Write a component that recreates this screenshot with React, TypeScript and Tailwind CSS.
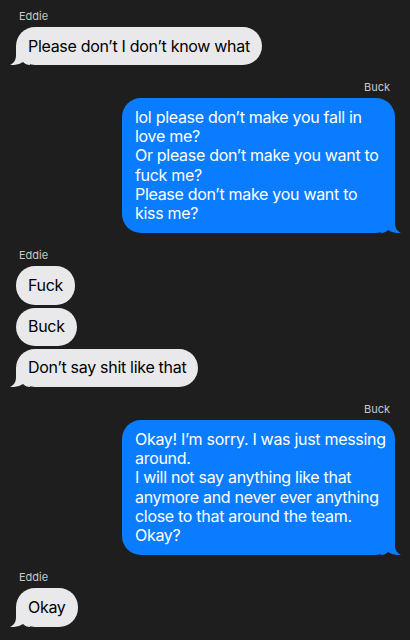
type Msg = { from: "Eddie" | "Buck"; lines: string[] };

const groups: Msg[] = [
  { from: "Eddie", lines: ["Please don’t I don’t know what"] },
  {
    from: "Buck",
    lines: [
      "lol please don’t make you fall in love me?\nOr please don’t make you want to fuck me?\nPlease don’t make you want to kiss me?",
    ],
  },
  { from: "Eddie", lines: ["Fuck", "Buck", "Don’t say shit like that"] },
  {
    from: "Buck",
    lines: [
      "Okay! I’m sorry. I was just messing around.\nI will not say anything like that anymore and never ever anything close to that around the team.\nOkay?",
    ],
  },
  { from: "Eddie", lines: ["Okay"] },
];

const Tail = ({ mine }: { mine: boolean }) => (
  <svg
    viewBox="0 0 20 20"
    className={`absolute bottom-0 h-5 w-5 ${mine ? "-right-[6px] -scale-x-100 text-[#0a7cff]" : "-left-[6px] text-[#e9e9eb]"}`}
    fill="currentColor"
  >
    <path d="M6 0 L6 10 C6 15 4 18 0 20 C5 20.5 10 19 13 17 C15 19 17 20 20 20 L20 0 Z" />
  </svg>
);

const Bubble = ({ text, mine, tail }: { text: string; mine: boolean; tail: boolean }) => (
  <div
    className={`relative max-w-[273px] whitespace-pre-line rounded-[19px] py-[9.5px] text-[16px] leading-[19.33px] tracking-[-0.3px] ${
      mine ? "bg-[#0a7cff] pl-[13px] pr-[9px] text-white" : "bg-[#e9e9eb] px-3 text-black"
    }`}
  >
    {tail && <Tail mine={mine} />}
    <span className="relative">{text}</span>
  </div>
);

export default function App() {
  return (
    <div
      className="flex min-h-[640px] w-[410px] flex-col gap-[15px] bg-[#1e1e1e] px-[15px] pt-[9px] pb-4"
      style={{ fontFamily: "Inter, 'Noto Sans', sans-serif" }}
    >
      {groups.map((g, i) => {
        const mine = g.from === "Buck";
        return (
          <div key={i} className={`flex flex-col ${mine ? "items-end" : "items-start pl-px"}`}>
            <div className={`mb-[4px] h-[14px] text-[11px] leading-[14px] text-[#c7c7cc] ${mine ? "pr-[5px]" : "pl-[3px]"}`}>
              {g.from}
            </div>
            <div className={`flex flex-col gap-[3px] ${mine ? "items-end" : "items-start"}`}>
              {g.lines.map((t, j) => (
                <Bubble key={j} text={t} mine={mine} tail={j === g.lines.length - 1} />
              ))}
            </div>
          </div>
        );
      })}
    </div>
  );
}
